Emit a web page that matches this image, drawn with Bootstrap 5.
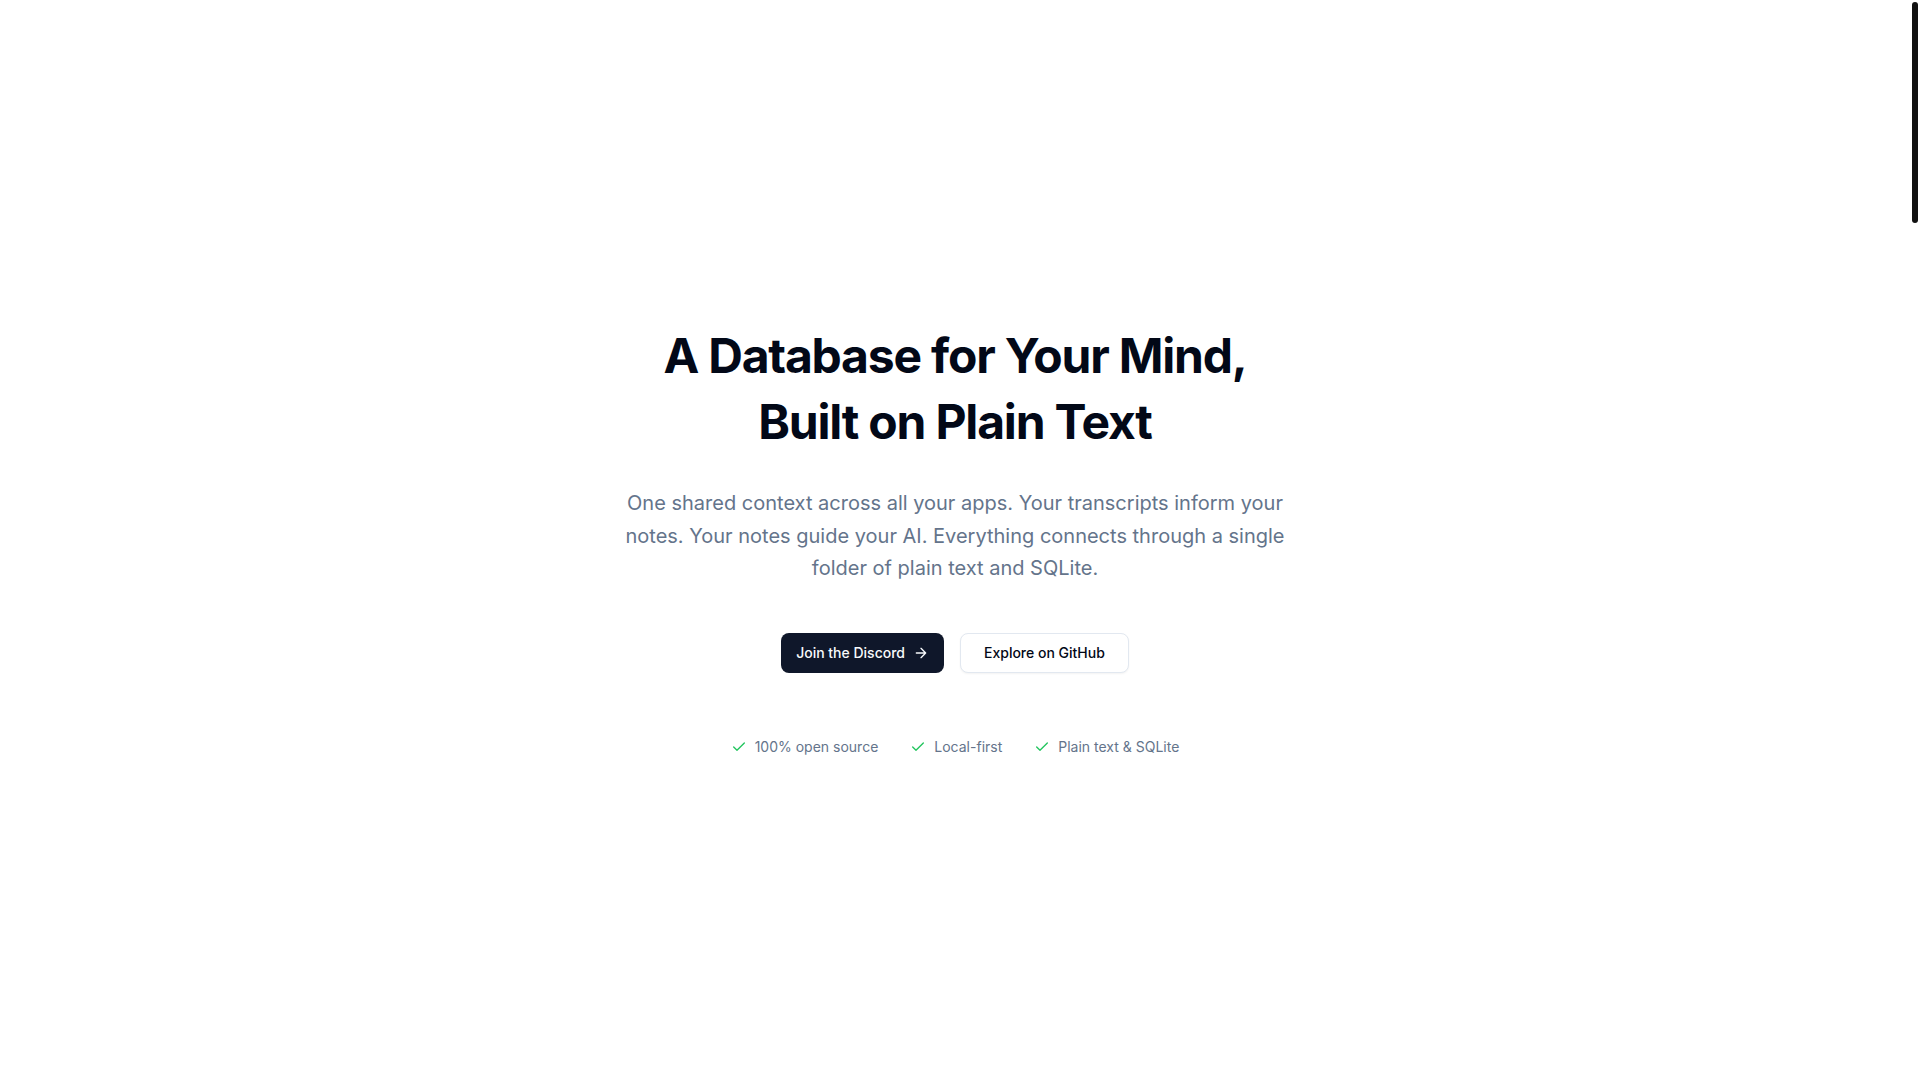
<!DOCTYPE html>
<html lang="en">
<head>
<meta charset="utf-8">
<meta name="viewport" content="width=device-width, initial-scale=1">
<title>A Database for Your Mind</title>
<link href="https://cdn.jsdelivr.net/npm/bootstrap@5.3.0/dist/css/bootstrap.min.css" rel="stylesheet">
<style>
  :root { --ink: #020817; --navy: #0f172a; --slate: #64748b; --line: #e2e8f0; }
  body { font-family: Inter, "Liberation Sans", sans-serif; color: var(--ink); padding-right: 10px; }
  .hero-copy { max-width: 768px; }
  .hero-title { font-size: 48px; line-height: 66px; font-weight: 700; letter-spacing: -0.025em; margin-bottom: 32px; }
  .hero-text { max-width: 672px; font-size: 20px; line-height: 1.625; color: var(--slate); }
  .hero-btn { height: 40px; font-size: 14px; line-height: 20px; font-weight: 500; border-radius: 8px; padding: 0 23px; }
  .hero-btn-main { --bs-btn-color: #f8fafc; --bs-btn-bg: var(--navy); --bs-btn-hover-color: #f8fafc; --bs-btn-hover-bg: #1e293b; border: 0; padding: 0 15px; }
  .hero-btn-alt { --bs-btn-color: var(--ink); --bs-btn-bg: #fff; --bs-btn-border-color: var(--line); --bs-btn-hover-bg: #f1f5f9; --bs-btn-hover-border-color: var(--line); box-shadow: 0 1px 2px rgba(0, 0, 0, .05); }
  .perks { gap: 32px; margin-top: 64px; font-size: 14px; line-height: 20px; color: var(--slate); }
  .stroke-icon { width: 16px; height: 16px; fill: none; stroke: currentColor; stroke-width: 2; stroke-linecap: round; stroke-linejoin: round; }
  .perks .stroke-icon { color: #22c55e; }
  .scroll-thumb { position: fixed; top: 2px; right: 2px; width: 6px; height: 20.5vh; border-radius: 3px; background: #111; }
</style>
</head>
<body>
<main class="min-vh-100 d-flex align-items-center justify-content-center">
  <section class="hero-copy d-flex flex-column align-items-center text-center">
    <h1 class="hero-title">A Database for Your Mind,<br>Built on Plain Text</h1>
    <p class="hero-text mb-5">One shared context across all your apps. Your transcripts inform your notes. Your notes guide your AI. Everything connects through a single folder of plain text and SQLite.</p>
    <div class="d-flex flex-wrap justify-content-center gap-3">
      <a href="#discord" class="btn hero-btn hero-btn-main d-inline-flex align-items-center gap-2">Join the Discord
        <svg class="stroke-icon" viewBox="0 0 24 24" aria-hidden="true"><path d="M5 12h14M12 5l7 7-7 7"/></svg></a>
      <a href="#github" class="btn hero-btn hero-btn-alt d-inline-flex align-items-center">Explore on GitHub</a>
    </div>
    <ul class="perks list-unstyled d-flex flex-wrap justify-content-center mb-0">
      <li class="d-flex align-items-center gap-2"><svg class="stroke-icon" viewBox="0 0 24 24" aria-hidden="true"><path d="M20 6 9 17l-5-5"/></svg><span>100% open source</span></li>
      <li class="d-flex align-items-center gap-2"><svg class="stroke-icon" viewBox="0 0 24 24" aria-hidden="true"><path d="M20 6 9 17l-5-5"/></svg><span>Local-first</span></li>
      <li class="d-flex align-items-center gap-2"><svg class="stroke-icon" viewBox="0 0 24 24" aria-hidden="true"><path d="M20 6 9 17l-5-5"/></svg><span>Plain text &amp; SQLite</span></li>
    </ul>
  </section>
</main>
<div class="scroll-thumb" aria-hidden="true"></div>
<script src="https://cdn.jsdelivr.net/npm/bootstrap@5.3.0/dist/js/bootstrap.bundle.min.js"></script>
</body>
</html>
